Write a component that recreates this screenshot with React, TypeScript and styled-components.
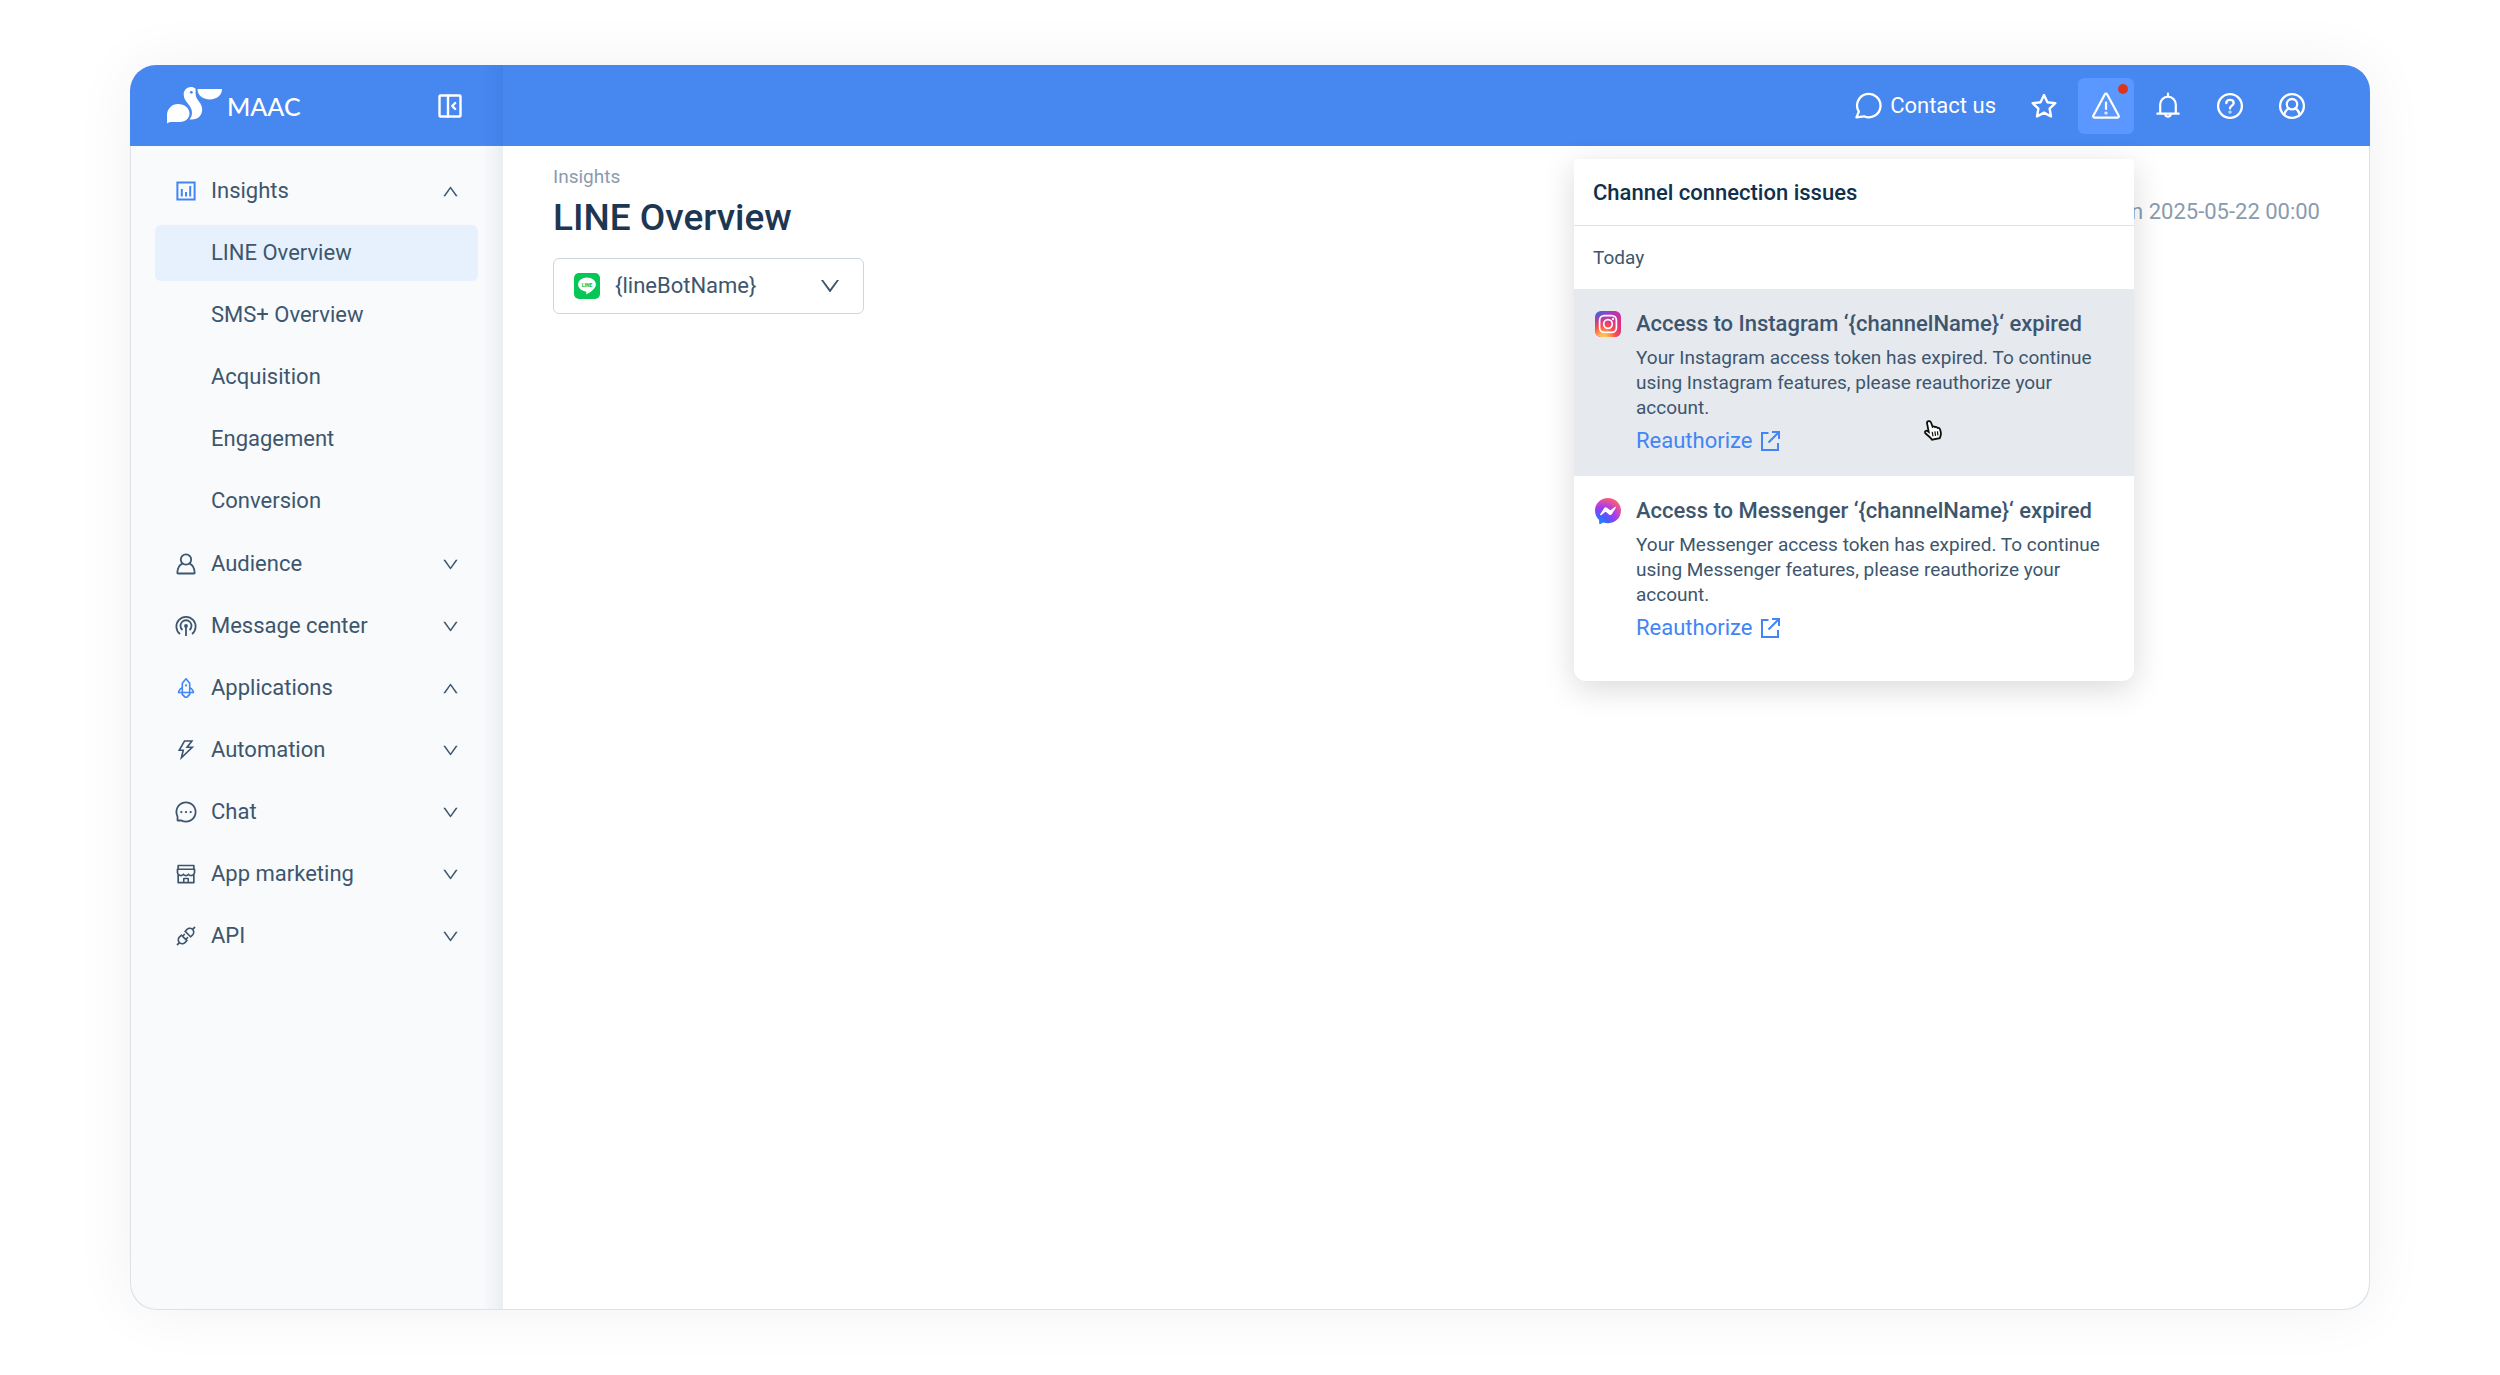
import React from "react";
import styled, { createGlobalStyle } from "styled-components";
import {
  AiOutlineApi,
  AiOutlineDown,
  AiOutlineMessage,
  AiOutlineRocket,
  AiOutlineShop,
  AiOutlineThunderbolt,
  AiOutlineUp,
} from "react-icons/ai";

const color = {
  blue: "#4687f0",
  blueActive: "#5a98ff",
  link: "#4285f4",
  ink: "#10304c",
  heading: "#1d3752",
  text: "#3d566e",
  muted: "#8a9bae",
  line: "#dbe2e8",
  side: "#f8fafc",
};

const GlobalStyle = createGlobalStyle`
  * { box-sizing: border-box; }
  body {
    margin: 0;
    background: #fff;
    color: ${color.text};
    font-family: Roboto, "Noto Sans", sans-serif;
    font-size: 22px;
    line-height: 34px;
  }
  button, select { font: inherit; color: inherit; }
  svg { display: block; flex: none; }
  h1, h2, h3, p, ul { margin: 0; padding: 0; }
`;

/* ---------- Layout ---------- */

const Page = styled.div`
  padding: 65px 130px;
`;

const Frame = styled.div`
  display: grid;
  grid-template-columns: 373px 1fr;
  grid-template-rows: 81px 1fr;
  min-height: calc(100vh - 130px);
  border-radius: 26px;
  box-shadow: 0 0 62px rgba(20, 40, 40, 0.06);
`;

const Brand = styled.div`
  display: flex;
  align-items: center;
  justify-content: space-between;
  padding: 0 41px 0 37px;
  border-top-left-radius: 26px;
  background: linear-gradient(to left, rgba(20, 60, 130, 0.08), transparent 20px) ${color.blue};
`;

const Logo = styled.div`
  display: flex;
  align-items: center;
  gap: 4px;
  color: #fff;
  font-family: Lato, sans-serif;
  font-size: 25px;
  font-weight: 500;
`;

const BareButton = styled.button`
  display: flex;
  padding: 0;
  border: 0;
  background: none;
  color: #fff;
  cursor: pointer;
`;

const TopBar = styled.header`
  display: flex;
  align-items: center;
  justify-content: flex-end;
  gap: 6px;
  padding: 0 50px;
  border-top-right-radius: 26px;
  background: ${color.blue};
  color: #fff;
`;

const BarButton = styled.button<{ $active?: boolean }>`
  display: grid;
  place-items: center;
  width: 56px;
  height: 56px;
  padding: 0;
  border: 0;
  border-radius: 6px;
  background: ${(p) => (p.$active ? color.blueActive : "transparent")};
  color: #fff;
  cursor: pointer;
`;

const ContactButton = styled(BareButton)`
  align-items: center;
  gap: 8px;
  padding: 0 14px;
`;

const Anchor = styled.div`
  position: relative;
`;

const AlertDot = styled.span`
  position: absolute;
  top: 6px;
  right: 6px;
  width: 10px;
  height: 10px;
  border-radius: 50%;
  background: #d9351f;
`;

/* ---------- Sidebar ---------- */

const Sidebar = styled.nav`
  display: flex;
  flex-direction: column;
  gap: 6px;
  padding: 17px 25px;
  border-bottom-left-radius: 26px;
  background: linear-gradient(to left, rgba(30, 45, 80, 0.06), transparent 20px) ${color.side};
  box-shadow: inset 1px -1px 0 ${color.line};
`;

const NavButton = styled.button`
  display: grid;
  grid-template-columns: 24px 1fr 19px;
  align-items: center;
  gap: 13px;
  width: 100%;
  height: 56px;
  padding: 0 18px 0 19px;
  border: 0;
  border-radius: 6px;
  background: none;
  text-align: left;
  cursor: pointer;
`;

const NavIcon = styled.span<{ $highlight?: boolean }>`
  display: grid;
  place-items: center;
  color: ${(p) => (p.$highlight ? color.link : "inherit")};
`;

const SubMenu = styled.ul`
  display: flex;
  flex-direction: column;
  gap: 6px;
  padding-bottom: 1px;
  list-style: none;
`;

const SubLink = styled.a<{ $current?: boolean }>`
  display: flex;
  align-items: center;
  height: 56px;
  padding-left: 56px;
  border-radius: 6px;
  background: ${(p) => (p.$current ? "#e7f1fd" : "transparent")};
  color: inherit;
  text-decoration: none;
`;

/* ---------- Main ---------- */

const Main = styled.main`
  padding: 17px 50px;
  border-bottom-right-radius: 26px;
  background: #fff;
  box-shadow: inset -1px -1px 0 ${color.line};
`;

const TitleRow = styled.div`
  display: flex;
  align-items: center;
  justify-content: space-between;
`;

const Breadcrumb = styled.p`
  color: ${color.muted};
  font-size: 19px;
  line-height: 28px;
`;

const Title = styled.h1`
  color: ${color.heading};
  font-size: 37px;
  font-weight: 500;
  line-height: 54px;
`;

const Updated = styled.p`
  color: ${color.muted};
`;

const UpdatedSlot = styled.div`
  padding-top: 16px;
`;

const SelectBox = styled.label`
  display: flex;
  align-items: center;
  gap: 15px;
  width: 311px;
  height: 56px;
  margin-top: 13px;
  padding: 0 21px 0 20px;
  border: 1px solid #cdd6df;
  border-radius: 6px;
`;

const Select = styled.select`
  flex: 1;
  min-width: 0;
  padding: 0;
  border: 0;
  outline: 0;
  appearance: none;
  background: none;
  cursor: pointer;
`;

/* ---------- Popover ---------- */

const Popover = styled.section`
  position: absolute;
  top: 81px;
  right: 0;
  z-index: 2;
  width: 560px;
  padding-bottom: 18px;
  border-radius: 4px 4px 12px 12px;
  background: #fff;
  box-shadow: 0 8px 32px rgba(0, 0, 0, 0.15);
  color: ${color.text};
`;

const PopoverTitle = styled.h2`
  padding: 17px 19px 15px;
  border-bottom: 1px solid ${color.line};
  color: ${color.ink};
  font-size: 22px;
  font-weight: 500;
`;

const DayLabel = styled.p`
  padding: 19px;
  font-size: 19px;
  line-height: 25px;
`;

const Issue = styled.article<{ $hovered?: boolean }>`
  display: flex;
  gap: 13px;
  padding: 18px 19px;
  background: ${(p) => (p.$hovered ? "#e6e9ee" : "#fff")};
`;

const IssueIcon = styled.span`
  display: grid;
  place-items: center;
  width: 30px;
  height: 34px;
`;

const IssueBody = styled.div`
  display: flex;
  flex: 1;
  flex-direction: column;
  align-items: flex-start;
  gap: 4px;
`;

const IssueTitle = styled.h3`
  font-size: 22px;
  font-weight: 500;
`;

const IssueText = styled.p`
  font-size: 19px;
  line-height: 25px;
`;

const IssueLink = styled.a`
  display: flex;
  align-items: center;
  gap: 6px;
  color: ${color.link};
  text-decoration: none;
`;

const Pointer = styled.svg`
  position: absolute;
  top: 260px;
  left: 348px;
`;

/* ---------- Icons ---------- */

function Stroke({
  size = 28,
  width = 2.3,
  children,
}: {
  size?: number;
  width?: number;
  children: React.ReactNode;
}) {
  return (
    <svg
      width={size}
      height={size}
      viewBox={`0 0 ${size} ${size}`}
      fill="none"
      stroke="currentColor"
      strokeWidth={width}
      strokeLinejoin="round"
      strokeLinecap="round"
      aria-hidden
    >
      {children}
    </svg>
  );
}

const Pelican = () => (
  <svg width="56" height="37" viewBox="0 0 56 37" fill="#fff" aria-hidden>
    <path d="M0 36.500V28a11 11 0 0 1 11-11c6.500 0 11.500 4 11.500 9.500 0 4.700-4 8.500-9.500 8.500H3.500Q1.500 35 0 36.500Z" />
    <path d="M28.600 1.800C27.400.6 25.800 0 24 0c-4 0-7.300 3.200-7.300 7.400 0 7.600 8.300 10.600 8.300 18.100 0 2.500-.8 5-2.400 6.900 7.400 1.100 12.600-3.400 12.600-9.900 0-7-6.600-9.500-6.600-15.500Z" />
    <path d="M30.500 2H55c0 6-5 10.400-12.300 10.400C35.500 12.400 30.500 8 30.500 2Z" />
    <circle cx="24.300" cy="5.300" r="1.400" fill={color.blue} />
  </svg>
);

const CollapseIcon = () => (
  <Stroke size={24} width={2.4}>
    <rect x="1.500" y="1.500" width="21" height="21" rx="1" />
    <path d="M10 1.500v21M17.200 9l-3 3 3 3" />
  </Stroke>
);

const BubbleIcon = () => (
  <Stroke>
    <path d="M2.400 25.400 4.800 19.700a11.700 11.700 0 1 1 5.200 4.600Q6.500 24.600 2.400 25.400Z" />
  </Stroke>
);

const StarIcon = () => (
  <Stroke width={2.4}>
    <path d="m14 3 3.400 7.200 7.900 1-5.700 5.400 1.400 7.900-7-3.900-7 3.900 1.400-7.900-5.700-5.400 7.900-1Z" />
  </Stroke>
);

const WarningIcon = () => (
  <Stroke width={2.2}>
    <path d="M12.900 2.300a1.300 1.300 0 0 1 2.200 0l11.600 21.500a1.300 1.300 0 0 1-1.100 1.900H2.400a1.300 1.300 0 0 1-1.100-1.900ZM14 10.500v6.500" />
    <circle cx="14" cy="21" r=".5" />
  </Stroke>
);

const BellIcon = () => (
  <Stroke width={2.2}>
    <path d="M14 1.500v2.500M6.200 21.500v-9a7.800 7.800 0 0 1 15.600 0v9M3.300 21.700h21.400M11.200 22.500a2.900 2.900 0 0 0 5.600 0" />
  </Stroke>
);

const HelpIcon = () => (
  <Stroke>
    <circle cx="14" cy="14" r="11.900" />
    <path d="M10.300 11.200C10.300 8.900 12 7.800 14 7.800s3.700 1.200 3.700 3.200c0 2.500-3.700 2.700-3.700 5.400" />
    <circle cx="14" cy="20" r=".4" />
  </Stroke>
);

const AccountIcon = () => (
  <Stroke>
    <circle cx="14" cy="14" r="11.900" />
    <circle cx="14" cy="12.200" r="5.200" />
    <path d="M6.300 22.500c.7-2.800 2.200-5 4.500-6.200M21.700 22.500c-.7-2.800-2.200-5-4.500-6.200" />
  </Stroke>
);

const InsightsIcon = () => (
  <Stroke size={24} width={2}>
    <path
      d="M3.400 3.400h17.200v17.200H3.400ZM7.800 10v7.500M12 13v4.500M16.200 7v10.500"
      strokeLinejoin="miter"
      strokeLinecap="butt"
    />
  </Stroke>
);

const AudienceIcon = () => (
  <Stroke size={24} width={1.8}>
    <circle cx="12" cy="7.500" r="5.200" />
    <path d="M8.300 11.600C5 13.200 3.500 16.500 3.300 20.700q0 .8.800.8h15.800q.8 0 .8-.8c-.2-4.200-1.700-7.500-5-9.100" />
  </Stroke>
);

const BroadcastIcon = () => (
  <Stroke size={24} width={1.8}>
    <path
      d="M6 20a9.600 9.600 0 1 1 12 0M8.500 16a5.500 5.500 0 1 1 7 0M12 12v10"
      strokeLinecap="butt"
    />
    <circle cx="12" cy="12" r="1" />
  </Stroke>
);

const ExternalIcon = () => (
  <Stroke size={24} width={2}>
    <path
      d="M10.500 4H4v17h16v-7M14 3h7v7M20.500 3.500 10.500 13.500"
      strokeLinejoin="miter"
      strokeLinecap="butt"
    />
  </Stroke>
);

const LineIcon = () => (
  <svg width="26" height="26" viewBox="0 0 26 26" aria-hidden>
    <rect width="26" height="26" rx="5" fill="#06c755" />
    <path
      d="M13 4.600c-4.900 0-8.900 3.100-8.900 7 0 3.500 3.200 6.300 7.400 6.900 1 .2.900.6.700 2.100-.1.600.3.900.9.500 1.500-.8 8.800-4.800 8.800-9.500 0-3.900-4-7-8.900-7Z"
      fill="#fff"
    />
    <text
      x="13"
      y="13.600"
      textAnchor="middle"
      fill="#06c755"
      fontSize="5"
      fontWeight="900"
      fontFamily="Roboto, sans-serif"
    >
      LINE
    </text>
  </svg>
);

const InstagramIcon = () => (
  <svg width="26" height="26" viewBox="0 0 26 26" fill="none" aria-hidden>
    <defs>
      <linearGradient id="ig-base" x1="4" y1="0" x2="20" y2="16" gradientUnits="userSpaceOnUse">
        <stop offset="0" stopColor="#4c5fd6" />
        <stop offset=".5" stopColor="#b436b8" />
        <stop offset="1" stopColor="#d92f8a" />
      </linearGradient>
      <radialGradient id="ig-warm" cx="8" cy="28" r="25" gradientUnits="userSpaceOnUse">
        <stop offset="0" stopColor="#ffd55c" />
        <stop offset=".2" stopColor="#ffb74f" />
        <stop offset=".5" stopColor="#ff5247" />
        <stop offset="1" stopColor="#e0307a" stopOpacity="0" />
      </radialGradient>
    </defs>
    <rect width="26" height="26" rx="6" fill="url(#ig-base)" />
    <rect width="26" height="26" rx="6" fill="url(#ig-warm)" />
    <g stroke="#fff" strokeWidth="1.700">
      <rect x="4.600" y="4.600" width="16.800" height="16.800" rx="4.600" />
      <circle cx="13" cy="13" r="4.300" />
    </g>
    <circle cx="18" cy="8" r="1.200" fill="#fff" />
  </svg>
);

const MessengerIcon = () => (
  <svg width="26" height="26" viewBox="0 0 26 26" aria-hidden>
    <defs>
      <radialGradient id="msg" cx="5" cy="26" r="28" gradientUnits="userSpaceOnUse">
        <stop offset="0" stopColor="#0a95ff" />
        <stop offset=".3" stopColor="#4b5bff" />
        <stop offset=".6" stopColor="#a33cf0" />
        <stop offset="1" stopColor="#ff5f74" />
      </radialGradient>
    </defs>
    <path
      d="M13 0C5.700 0 0 5.400 0 12.600c0 3.800 1.500 7 4.100 9.300v3.300c0 .7.700 1 1.300.7l3-1.300c1.400.4 3 .6 4.600.6 7.300 0 13-5.400 13-12.600S20.300 0 13 0Z"
      fill="url(#msg)"
    />
    <path
      d="m5.200 16.300 3.900-6.100a2 2 0 0 1 2.900-.5l3 2.300q.4.300.8 0l4.100-3.100c.6-.4 1.300.2.900.9l-3.900 6.100a2 2 0 0 1-2.900.5l-3-2.300q-.4-.3-.8 0l-4.100 3.100c-.6.4-1.300-.2-.9-.9Z"
      fill="#fff"
    />
  </svg>
);

const HandPointer = () => (
  <Pointer width="22" height="24" viewBox="0 0 22 24" aria-hidden>
    <path
      d="M6.500 2.200c1.200-.4 2.100.2 2.500 1.300l1.600 4.200c.8-.6 2-.4 2.500.4.900-.4 2-.1 2.400.8 1.200-.3 2.300.4 2.600 1.500l.8 3.400c.4 2.200-.7 3.700-1.200 5.400l-7.700 1.500c-1.500-2.600-4.600-4-6.900-6.800-.8-1.500.9-2.600 2.300-1.900l1.300.9L5.100 4.600c-.4-1.100.3-2 1.400-2.400Z"
      fill="#fff"
      stroke="#111"
      strokeWidth="1.800"
    />
    <path
      d="m10.200 12.800.8 4.600M12.900 12.400l.6 4.500M15.500 12.200l.4 4.200"
      stroke="#111"
      strokeWidth="1.200"
    />
  </Pointer>
);

/* ---------- Content ---------- */

type Section = {
  label: string;
  icon: React.ReactNode;
  open?: boolean;
  children?: string[];
};

const sections: Section[] = [
  {
    label: "Insights",
    icon: <InsightsIcon />,
    open: true,
    children: ["LINE Overview", "SMS+ Overview", "Acquisition", "Engagement", "Conversion"],
  },
  { label: "Audience", icon: <AudienceIcon /> },
  { label: "Message center", icon: <BroadcastIcon /> },
  { label: "Applications", icon: <AiOutlineRocket size={24} />, open: true },
  { label: "Automation", icon: <AiOutlineThunderbolt size={24} /> },
  { label: "Chat", icon: <AiOutlineMessage size={24} /> },
  { label: "App marketing", icon: <AiOutlineShop size={24} /> },
  { label: "API", icon: <AiOutlineApi size={24} /> },
];

const issues = [
  { channel: "Instagram", icon: <InstagramIcon />, hovered: true },
  { channel: "Messenger", icon: <MessengerIcon />, hovered: false },
];

function NavSection({ section }: { section: Section }) {
  return (
    <>
      <NavButton type="button" aria-expanded={!!section.open}>
        <NavIcon $highlight={section.open}>{section.icon}</NavIcon>
        {section.label}
        {section.open ? <AiOutlineUp size={19} /> : <AiOutlineDown size={19} />}
      </NavButton>
      {section.children && (
        <SubMenu>
          {section.children.map((name, i) => (
            <li key={name}>
              <SubLink href="#" $current={i === 0}>
                {name}
              </SubLink>
            </li>
          ))}
        </SubMenu>
      )}
    </>
  );
}

function IssuesPopover() {
  return (
    <Popover>
      <PopoverTitle>Channel connection issues</PopoverTitle>
      <DayLabel>Today</DayLabel>
      {issues.map(({ channel, icon, hovered }) => (
        <Issue key={channel} $hovered={hovered}>
          <IssueIcon>{icon}</IssueIcon>
          <IssueBody>
            <IssueTitle>{`Access to ${channel} ‘{channelName}‘ expired`}</IssueTitle>
            <IssueText>
              {`Your ${channel} access token has expired. To continue using ${channel} features, please reauthorize your account.`}
            </IssueText>
            <IssueLink href="#">
              Reauthorize
              <ExternalIcon />
            </IssueLink>
          </IssueBody>
        </Issue>
      ))}
      <HandPointer />
    </Popover>
  );
}

export default function App() {
  return (
    <Page>
      <GlobalStyle />
      <Frame>
        <Brand>
          <Logo>
            <Pelican />
            MAAC
          </Logo>
          <BareButton type="button" aria-label="Collapse sidebar">
            <CollapseIcon />
          </BareButton>
        </Brand>
        <TopBar>
          <ContactButton type="button">
            <BubbleIcon />
            Contact us
          </ContactButton>
          <BarButton type="button" aria-label="Favorites">
            <StarIcon />
          </BarButton>
          <Anchor>
            <BarButton type="button" aria-label="Channel issues" aria-expanded $active>
              <WarningIcon />
              <AlertDot />
            </BarButton>
            <IssuesPopover />
          </Anchor>
          <BarButton type="button" aria-label="Notifications">
            <BellIcon />
          </BarButton>
          <BarButton type="button" aria-label="Help">
            <HelpIcon />
          </BarButton>
          <BarButton type="button" aria-label="Account">
            <AccountIcon />
          </BarButton>
        </TopBar>
        <Sidebar>
          {sections.map((section) => (
            <NavSection key={section.label} section={section} />
          ))}
        </Sidebar>
        <Main>
          <TitleRow>
            <div>
              <Breadcrumb>Insights</Breadcrumb>
              <Title>LINE Overview</Title>
            </div>
            <UpdatedSlot>
              <Updated>on 2025-05-22 00:00</Updated>
            </UpdatedSlot>
          </TitleRow>
          <SelectBox>
            <LineIcon />
            <Select aria-label="LINE bot" defaultValue="bot">
              <option value="bot">{"{lineBotName}"}</option>
            </Select>
            <AiOutlineDown size={24} />
          </SelectBox>
        </Main>
      </Frame>
    </Page>
  );
}
